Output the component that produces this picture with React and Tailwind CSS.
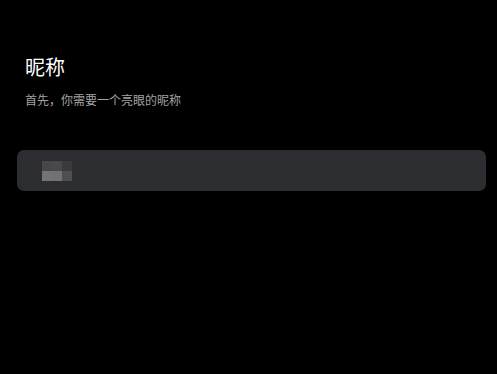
import React from 'react';

const cjk = { fontFamily: '"Noto Sans CJK SC", "Noto Sans", sans-serif' };

// mosaic placeholder for the blurred nickname
const Mosaic = () => (
    <div className="grid grid-cols-[10px_10px_10px] grid-rows-[10px_10px]">
        <div className="bg-[#46464b]" />
        <div className="bg-[#48484d]" />
        <div className="bg-[#3a3a3e]" />
        <div className="bg-[#727277]" />
        <div className="bg-[#707075]" />
        <div className="bg-[#4f4f53]" />
    </div>
);

export default function App() {
    return (
        <div className="w-[497px] h-[374px] bg-black overflow-hidden" style={cjk}>
            <div className="pt-[53px] px-[25px]">
                <h1 className="text-[20px] leading-[28px] text-white font-normal">昵称</h1>
                <p className="mt-[11px] text-[12px] leading-[16px] text-[#a3a3a3]">首先，你需要一个亮眼的昵称</p>
            </div>
            <div className="mt-[42px] mx-[17px] w-[469px] h-[41px] rounded-[7px] bg-[#2c2d31] flex items-center pl-[25px]">
                <Mosaic />
            </div>
        </div>
    );
}
